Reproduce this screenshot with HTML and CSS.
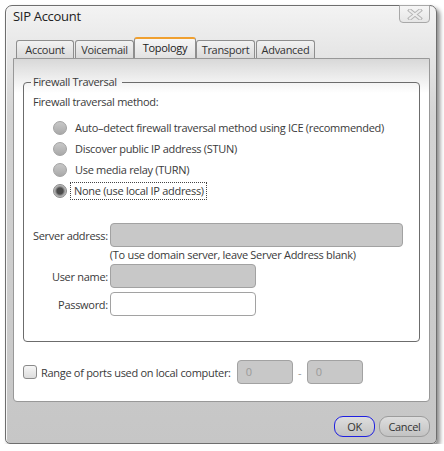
FILE: index.html
```html
<!doctype html>
<html lang="en">

<head>
  <title>SIP Account</title>
  <link rel="stylesheet" href="styles.css">
</head>

<body>
  <div class="window">
    <div class="titlebar">
      <span class="title">SIP Account</span>
      <button class="close" type="button">
        <svg width="16" height="11" viewBox="0 0 16 11">
          <path d="M3 1.5 L13 9.5 M13 1.5 L3 9.5" stroke="#b4b4b4" stroke-width="4" stroke-linecap="square"/>
          <path d="M3 1.5 L13 9.5 M13 1.5 L3 9.5" stroke="#ececec" stroke-width="2" stroke-linecap="square"/>
        </svg>
      </button>
    </div>

    <div class="tabs">
      <div class="tab">Account</div>
      <div class="tab">Voicemail</div>
      <div class="tab active">Topology</div>
      <div class="tab">Transport</div>
      <div class="tab">Advanced</div>
    </div>

    <div class="panel">
      <fieldset class="group">
        <legend>Firewall Traversal</legend>
        <div class="method-label">Firewall traversal method:</div>
        <div class="radios">
          <div class="radio-row"><span class="radio"></span><span>Auto–detect firewall traversal method using ICE (recommended)</span></div>
          <div class="radio-row"><span class="radio"></span><span>Discover public IP address (STUN)</span></div>
          <div class="radio-row"><span class="radio"></span><span>Use media relay (TURN)</span></div>
          <div class="radio-row"><span class="radio checked"></span><span class="focused">None (use local IP address)</span></div>
        </div>

        <div class="server-form">
          <label class="field-label">Server address:</label>
          <div class="input wide disabled"></div>
          <div></div>
          <div class="hint">(To use domain server, leave Server Address blank)</div>
          <label class="field-label">User name:</label>
          <div class="input disabled"></div>
          <label class="field-label spaced">Password:</label>
          <div class="input spaced"></div>
        </div>
      </fieldset>

      <div class="ports-row">
        <span class="checkbox"></span>
        <span class="ports-label">Range of ports used on local computer:</span>
        <div class="input port disabled">0</div>
        <span class="dash">-</span>
        <div class="input port disabled">0</div>
      </div>
    </div>

    <div class="footer">
      <button class="btn default" type="button">OK</button>
      <button class="btn" type="button">Cancel</button>
    </div>
  </div>
</body>

</html>
```

FILE: styles.css
```css
body {
  margin: 0;
  background-color: #fff;
  font-family: "Open Sans", "Liberation Sans", sans-serif;
  font-size: 11px;
  letter-spacing: -0.3px;
  color: #3a3a3a;
}

.window {
  box-sizing: border-box;
  width: 432px;
  height: 439px;
  margin: 5px 0 0 5px;
  padding: 0 6px 0 7px;
  display: flex;
  flex-direction: column;
  border: 1px solid #6e6e6e;
  border-radius: 7px 7px 5px 5px;
  background: linear-gradient(#f3f3f3, #d4d4d4 110px, #c6c6c6);
  box-shadow: 3px 3px 4px rgba(0, 0, 0, 0.45), inset 1px 1px 0 #f6f6f6;
}

/* title bar */
.titlebar {
  height: 31px;
  display: flex;
  justify-content: space-between;
  align-items: flex-start;
}

.title {
  padding-top: 1px;
  font-size: 13px;
  line-height: 18px;
  color: #222;
}

.close {
  width: 31px;
  height: 18px;
  margin-top: -1px;
  padding: 0;
  display: flex;
  align-items: center;
  justify-content: center;
  border: 1px solid #a8a8a8;
  border-radius: 0 0 4px 4px;
  background: linear-gradient(#f6f6f6, #e6e6e6);
}

/* tabs */
.tabs {
  height: 21px;
  padding-left: 3px;
  display: flex;
  align-items: flex-end;
}

.tab {
  box-sizing: border-box;
  width: 58px;
  height: 18px;
  margin-right: 1px;
  line-height: 17px;
  text-align: center;
  border: 1px solid #8e8e8e;
  border-bottom: none;
  border-radius: 3px 3px 0 0;
  background: linear-gradient(#f2f2f2, #dadada);
  color: #333;
}

.tab + .tab {
  width: 59px;
}

.tab.active {
  width: 62px;
  height: 21px;
  margin: 0 0 0 -1px;
  line-height: 18px;
  border-top: 2px solid #f0a030;
  background: linear-gradient(#f6f6f6, #e2e2e2);
  color: #222;
}

/* tab page */
.panel {
  box-sizing: border-box;
  height: 344px;
  border: 1px solid #989898;
  border-radius: 0 0 4px 4px;
  background: linear-gradient(#d8d8d8, #fff 34px);
}

.group {
  margin: 15px 9px 0 9px;
  padding: 4px 9px 25px 9px;
  border: 1px solid #6c6c6c;
  border-radius: 4px;
}

.group legend {
  margin-left: -2px;
  padding: 0 5px 0 2px;
  line-height: 16px;
}

.method-label {
  line-height: 16px;
}

.radios {
  margin-top: 7px;
  padding-left: 20px;
}

.radio-row {
  height: 21px;
  display: flex;
  align-items: center;
}

.radio {
  box-sizing: border-box;
  width: 14px;
  height: 14px;
  margin-right: 8px;
  border: 1px solid #a2a2a2;
  border-radius: 50%;
  background: linear-gradient(#c8c8c8, #a9a9a9);
}

.radio.checked {
  border-color: #8a8a8a;
  background: radial-gradient(circle, #4c4c4c 0 3px, #7a7a7a 4px, #a8a8a8 5px, #bdbdbd 6px);
}

.focused {
  margin-left: -4px;
  padding: 0 2px 0 3px;
  line-height: 16px;
  outline: 1px dotted #444;
}

/* address fields */
.server-form {
  margin-top: 22px;
  display: grid;
  grid-template-columns: auto auto;
  column-gap: 2px;
  justify-content: start;
  justify-items: start;
  align-items: center;
}

.field-label {
  justify-self: end;
  white-space: nowrap;
}

.spaced {
  margin-top: 4px;
}

.input {
  box-sizing: border-box;
  width: 146px;
  height: 24px;
  padding-left: 8px;
  line-height: 22px;
  border: 1px solid #a2a2a2;
  border-radius: 4px;
  background-color: #fff;
  color: #9a9a9a;
}

.input.disabled {
  background-color: #c8c8c8;
}

.input.wide {
  width: 293px;
}

.hint {
  height: 17px;
  line-height: 16px;
  white-space: nowrap;
}

/* port range */
.ports-row {
  margin: 18px 0 0 9px;
  display: flex;
  align-items: center;
}

.checkbox {
  box-sizing: border-box;
  width: 14px;
  height: 14px;
  margin-right: 4px;
  border: 1px solid #8a8a8a;
  border-radius: 3px;
  background: linear-gradient(#f6f6f6, #dcdcdc);
}

.ports-label {
  margin-right: 6px;
}

.input.port {
  width: 56px;
}

.dash {
  width: 14px;
  text-align: center;
  color: #999;
}

/* buttons */
.footer {
  padding-top: 14px;
  display: flex;
  justify-content: flex-end;
  gap: 4px;
}

.btn {
  box-sizing: border-box;
  height: 21px;
  width: 51px;
  padding: 0;
  font-family: inherit;
  font-size: 11px;
  letter-spacing: inherit;
  color: #333;
  border: 1px solid #9c9c9c;
  border-radius: 9px;
  background: linear-gradient(#dedede, #c2c2c2);
}

.btn.default {
  width: 41px;
  border-color: #2020e0;
}
```
